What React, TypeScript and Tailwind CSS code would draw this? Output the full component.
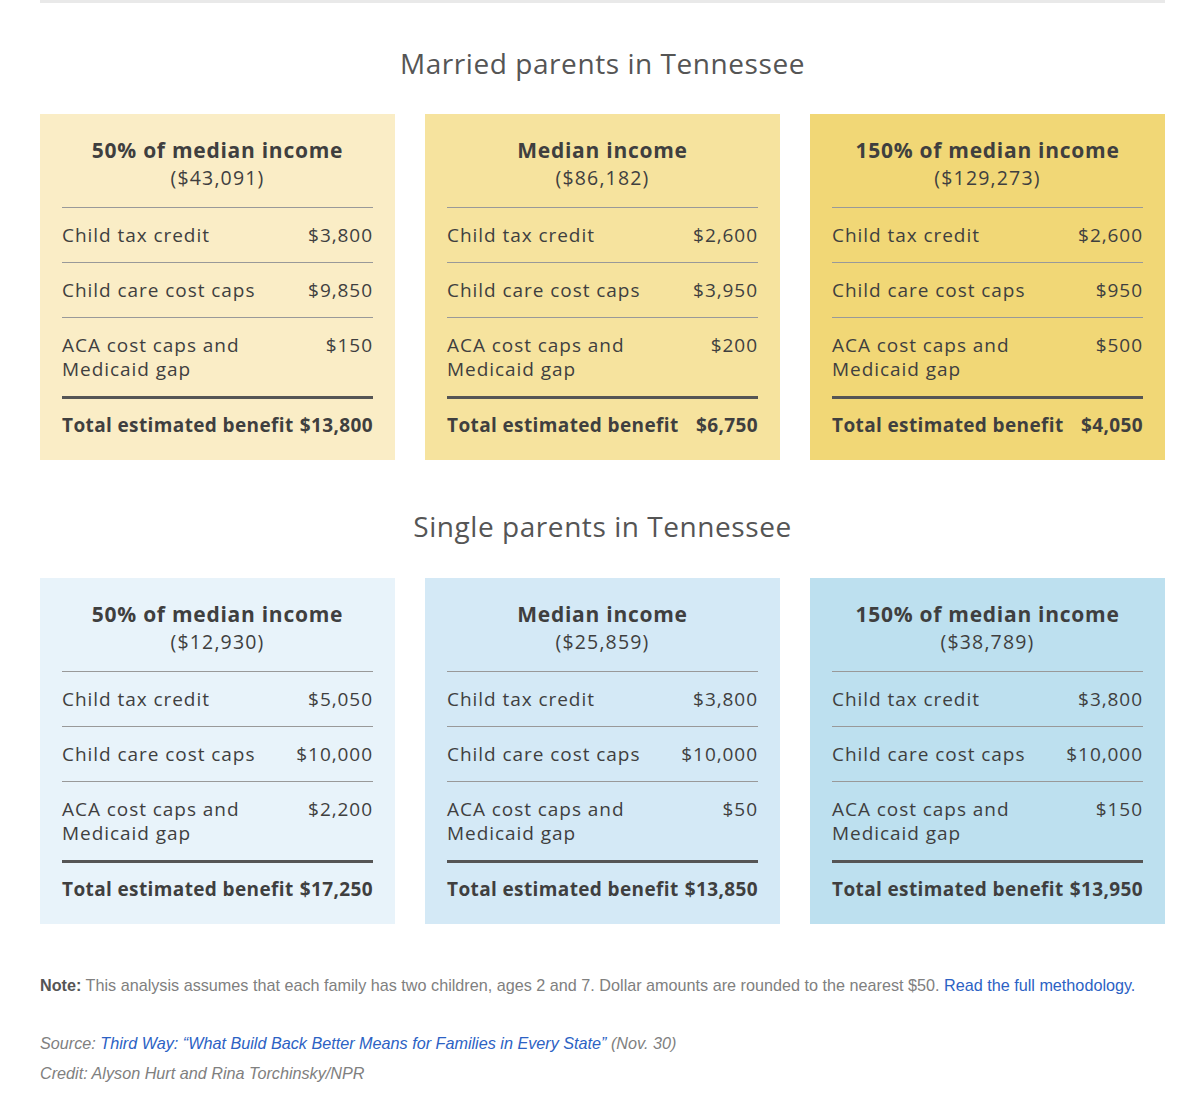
import React from "react";

type Row = { label: string; value: string };
type Card = { title: string; income: string; rows: Row[]; total: string; bg: string };

const married: Card[] = [
  {
    title: "50% of median income",
    income: "($43,091)",
    rows: [
      { label: "Child tax credit", value: "$3,800" },
      { label: "Child care cost caps", value: "$9,850" },
      { label: "ACA cost caps and Medicaid gap", value: "$150" },
    ],
    total: "$13,800",
    bg: "bg-[#faedc6]",
  },
  {
    title: "Median income",
    income: "($86,182)",
    rows: [
      { label: "Child tax credit", value: "$2,600" },
      { label: "Child care cost caps", value: "$3,950" },
      { label: "ACA cost caps and Medicaid gap", value: "$200" },
    ],
    total: "$6,750",
    bg: "bg-[#f6e39e]",
  },
  {
    title: "150% of median income",
    income: "($129,273)",
    rows: [
      { label: "Child tax credit", value: "$2,600" },
      { label: "Child care cost caps", value: "$950" },
      { label: "ACA cost caps and Medicaid gap", value: "$500" },
    ],
    total: "$4,050",
    bg: "bg-[#f1d776]",
  },
];

const single: Card[] = [
  {
    title: "50% of median income",
    income: "($12,930)",
    rows: [
      { label: "Child tax credit", value: "$5,050" },
      { label: "Child care cost caps", value: "$10,000" },
      { label: "ACA cost caps and Medicaid gap", value: "$2,200" },
    ],
    total: "$17,250",
    bg: "bg-[#e8f3fa]",
  },
  {
    title: "Median income",
    income: "($25,859)",
    rows: [
      { label: "Child tax credit", value: "$3,800" },
      { label: "Child care cost caps", value: "$10,000" },
      { label: "ACA cost caps and Medicaid gap", value: "$50" },
    ],
    total: "$13,850",
    bg: "bg-[#d4e9f6]",
  },
  {
    title: "150% of median income",
    income: "($38,789)",
    rows: [
      { label: "Child tax credit", value: "$3,800" },
      { label: "Child care cost caps", value: "$10,000" },
      { label: "ACA cost caps and Medicaid gap", value: "$150" },
    ],
    total: "$13,950",
    bg: "bg-[#bde0ef]",
  },
];

function BenefitCard({ card }: { card: Card }) {
  return (
    <div className={`${card.bg} px-[22px] pt-[22px] pb-[23px] text-[#3f3f3f]`}>
      <div className="text-center pb-[15px]">
        <div className="text-[21px] font-bold leading-[28px] tracking-[0.035em]">{card.title}</div>
        <div className="text-[19.5px] leading-[28px] tracking-[0.06em]">{card.income}</div>
      </div>
      {card.rows.map((row) => (
        <div
          key={row.label}
          className="flex justify-between items-start border-t border-[#999] pt-[15px] pb-[15px] text-[19px] leading-[24px] tracking-[0.05em]"
        >
          <span className="max-w-[210px]">{row.label}</span>
          <span className="whitespace-nowrap">{row.value}</span>
        </div>
      ))}
      <div className="flex justify-between border-t-[3px] border-[#555] pt-[14px] text-[19px] font-bold leading-[24px] tracking-[0.02em] whitespace-nowrap">
        <span>Total estimated benefit</span>
        <span>{card.total}</span>
      </div>
    </div>
  );
}

function Section({ title, cards, top, bottom }: { title: string; cards: Card[]; top: string; bottom: string }) {
  return (
    <section>
      <h2 className={`text-center text-[28px] leading-[36px] text-[#555] tracking-[0.02em] ${top} ${bottom}`}>
        {title}
      </h2>
      <div className="grid grid-cols-3 gap-[30px]">
        {cards.map((c) => (
          <BenefitCard key={c.title + c.income} card={c} />
        ))}
      </div>
    </section>
  );
}

export default function App() {
  return (
    <div className="bg-white w-[1200px] min-h-[1100px] px-[40px] pr-[35px]" style={{ fontFamily: '"Open Sans", Arial, sans-serif' }}>
      <div className="border-t-[3px] border-[#e9e9e9]" />
      <Section title="Married parents in Tennessee" cards={married} top="pt-[42px]" bottom="pb-[33px]" />
      <Section title="Single parents in Tennessee" cards={single} top="pt-[48px]" bottom="pb-[34px]" />
      <div className="pt-[50px] text-[16.2px] leading-[22px] text-[#808080]" style={{ fontFamily: '"Liberation Sans", Arial, sans-serif' }}>
        <p>
          <b className="text-[#555]">Note:</b> This analysis assumes that each family has two children, ages 2 and 7.
          Dollar amounts are rounded to the nearest $50.{" "}
          <a className="text-[#2c62c4]">Read the full methodology.</a>
        </p>
        <p className="italic mt-[36px]">
          Source: <a className="text-[#2c62c4]">Third Way: “What Build Back Better Means for Families in Every State”</a> (Nov. 30)
        </p>
        <p className="italic mt-[8px]">Credit: Alyson Hurt and Rina Torchinsky/NPR</p>
      </div>
    </div>
  );
}
